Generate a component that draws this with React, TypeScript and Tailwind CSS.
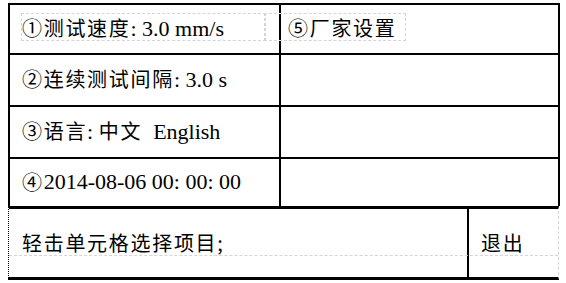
const zh = '"Liberation Serif", "Noto Sans CJK SC", serif'

function Cell({ children, className = 'pl-[12px]' }: { children?: React.ReactNode; className?: string }) {
    return <div className={`flex items-center pb-[2px] text-[22px] text-black whitespace-nowrap ${className}`}>{children}</div>
}

function Cn({ children }: { children: React.ReactNode }) {
    return <span className="text-[20px] tracking-[1.7px]" style={{ fontFamily: '"Noto Sans CJK SC", sans-serif' }}>{children}</span>
}

export default function App() {
    const rows = [
        { h: 'h-[50px]', left: <><Cn>①测试速度</Cn>:&nbsp;3.0 mm/s</>, right: <Cn>⑤厂家设置</Cn> },
        { h: 'h-[52px]', left: <><Cn>②连续测试间隔</Cn>:&nbsp;3.0 s</>, right: null },
        { h: 'h-[52px]', left: <><Cn>③语言</Cn>:&nbsp;<Cn>中文</Cn>&nbsp; English</>, right: null },
        { h: 'h-[47px]', left: <><Cn>④</Cn>2014-08-06 00: 00: 00</>, right: null },
    ]

    return (
        <div className="w-[566px] h-[283px] bg-white pt-[3px] pl-[8px]" style={{ fontFamily: zh }}>
            <div className="relative w-[552px]">
                <div className="border-t-2 border-x-2 border-black">
                    {rows.map((r, i) => (
                        <div key={i} className={`flex ${r.h} ${i < rows.length - 1 ? 'border-b-2 border-black' : ''}`}>
                            <div className="w-[271px] border-r-2 border-black flex">
                                <Cell>{r.left}</Cell>
                            </div>
                            <div className="flex-1 flex">
                                <Cell className="pl-[7px]">{r.right}</Cell>
                            </div>
                        </div>
                    ))}
                </div>

                <div className="relative flex h-[74px] w-[551px] border-y-[3px] border-black border-l border-l-black border-r border-r-gray-300" style={{ borderTopStyle: 'solid', borderBottomStyle: 'solid', borderLeftStyle: 'dotted', borderRightStyle: 'dashed' }}>
                    <div className="w-[460px] border-r-2 border-black flex items-center pl-[13px]">
                        <Cn>轻击单元格选择项目;</Cn>
                    </div>
                    <div className="flex-1 flex items-center pl-[12px]">
                        <Cn>退出</Cn>
                    </div>
                    <div className="absolute left-0 right-0 top-[46px] border-t border-dashed border-gray-300" />
                </div>

                <div className="absolute left-[13px] top-[10px] w-[245px] h-[28px] border border-dashed border-gray-300" />
                <div className="absolute left-[256px] top-[10px] w-[142px] h-[28px] border border-dashed border-gray-300" />
            </div>
        </div>
    )
}
